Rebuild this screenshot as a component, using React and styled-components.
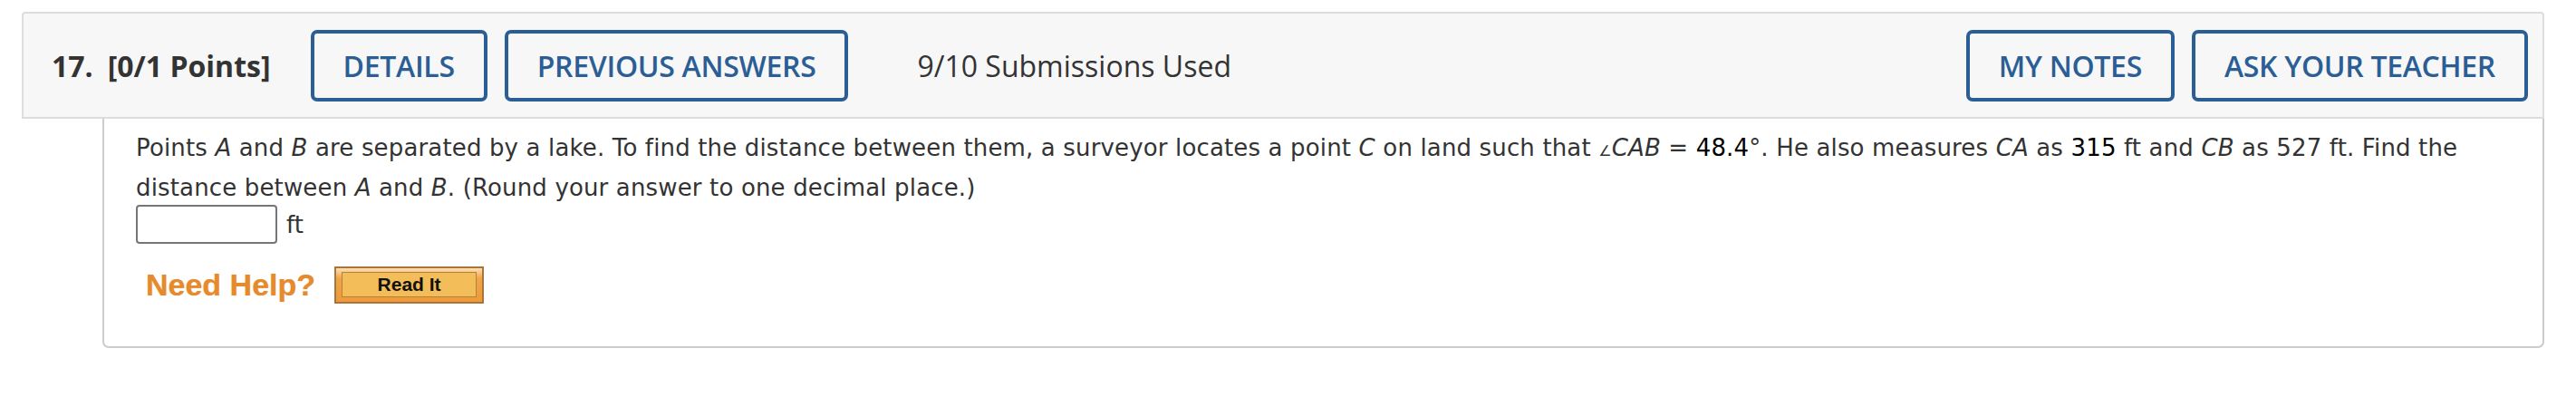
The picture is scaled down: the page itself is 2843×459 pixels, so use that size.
import React from "react";
import styled, { createGlobalStyle } from "styled-components";

const GlobalStyle = createGlobalStyle`
  html, body {
    margin: 0;
    padding: 0;
    background: #fff;
  }
`;

const Page = styled.div`
  padding: 13px 35px 0 24px;
`;

const Header = styled.div`
  display: flex;
  align-items: center;
  box-sizing: border-box;
  height: 118px;
  padding: 0 16px 0 31px;
  background: #f7f7f7;
  border: 2px solid #dddddd;
  border-radius: 4px 4px 0 0;
  font-family: "Open Sans", "Liberation Sans", sans-serif;
  color: #333;
`;

const Title = styled.div`
  font-size: 32px;
  font-weight: 700;
  margin-right: 44px;
  white-space: nowrap;
`;

const Points = styled.span`
  margin-left: 16px;
`;

const Group = styled.div`
  display: flex;
  gap: 19px;
  margin-left: ${p => (p.$right ? "auto" : "0")};
`;

const Button = styled.button`
  box-sizing: border-box;
  height: 79px;
  padding: 0 32px;
  background: #f7f7f7;
  border: 4px solid #2b5e94;
  border-radius: 7px;
  font-family: "Open Sans", "Liberation Sans", sans-serif;
  font-size: 32px;
  font-weight: 600;
  color: #2b5e94;
  letter-spacing: -0.3px;
  cursor: pointer;
`;

const Used = styled.div`
  margin-left: 76px;
  font-size: 32px;
  font-weight: 400;
  white-space: nowrap;
`;

const Body = styled.div`
  margin-left: 89px;
  box-sizing: border-box;
  height: 253px;
  padding: 12px 36px 0 35px;
  background: #fff;
  border: 2px solid #cccccc;
  border-top: none;
  border-radius: 0 0 7px 7px;
  font-family: "DejaVu Sans", Verdana, sans-serif;
  font-size: 26px;
  line-height: 40px;
  color: #333;
`;

const Text = styled.div`
  letter-spacing: 0.15px;
`;

const Num = styled.span`
  color: #000;
`;

const Angle = styled.span`
  font-size: 16px;
`;

const AnswerRow = styled.div`
  display: flex;
  align-items: center;
  gap: 10px;
  margin-top: -1px;
`;

const Input = styled.input`
  box-sizing: border-box;
  width: 156px;
  height: 43px;
  border: 2px solid #767676;
  border-radius: 4px;
  background: #fff;
`;

const HelpRow = styled.div`
  display: flex;
  align-items: center;
  gap: 21px;
  margin-top: 25px;
  padding-left: 11px;
`;

const NeedHelp = styled.span`
  font-family: "Liberation Sans", Arial, sans-serif;
  font-weight: 700;
  font-size: 34px;
  line-height: 41px;
  color: #e68a2e;
  text-shadow: 0 0 1px rgba(230, 138, 46, 0.6);
`;

const ReadIt = styled.button`
  box-sizing: border-box;
  width: 165px;
  height: 41px;
  padding: 4px 6px 5px;
  border: 2px solid #a8763c;
  background: linear-gradient(#fde0b4 0%, #f0a448 30%, #ee9a38 100%);
  cursor: pointer;
  display: flex;
`;

const ReadItInner = styled.span`
  flex: 1;
  display: flex;
  align-items: center;
  justify-content: center;
  border: 1px solid #b3823f;
  background: #f3bd5a;
  font-family: "Liberation Sans", Arial, sans-serif;
  font-weight: 700;
  font-size: 21px;
  color: #111;
`;

export default function App() {
  return (
    <>
      <GlobalStyle />
      <Page>
        <Header>
          <Title>
            17.<Points>[0/1 Points]</Points>
          </Title>
          <Group>
            <Button>DETAILS</Button>
            <Button>PREVIOUS ANSWERS</Button>
          </Group>
          <Used>9/10 Submissions Used</Used>
          <Group $right>
            <Button>MY NOTES</Button>
            <Button>ASK YOUR TEACHER</Button>
          </Group>
        </Header>
        <Body>
          <Text>
            Points <i>A</i> and <i>B</i> are separated by a lake. To find the
            distance between them, a surveyor locates a point <i>C</i> on land
            such that <Angle>∠</Angle>
            <i>CAB</i> = <Num>48.4</Num>°. He also measures <i>CA</i> as{" "}
            <Num>315</Num> ft and <i>CB</i> as 527 ft. Find the distance
            between <i>A</i> and <i>B</i>. (Round your answer to one decimal
            place.)
          </Text>
          <AnswerRow>
            <Input type="text" />
            <span>ft</span>
          </AnswerRow>
          <HelpRow>
            <NeedHelp>Need Help?</NeedHelp>
            <ReadIt>
              <ReadItInner>Read It</ReadItInner>
            </ReadIt>
          </HelpRow>
        </Body>
      </Page>
    </>
  );
}
